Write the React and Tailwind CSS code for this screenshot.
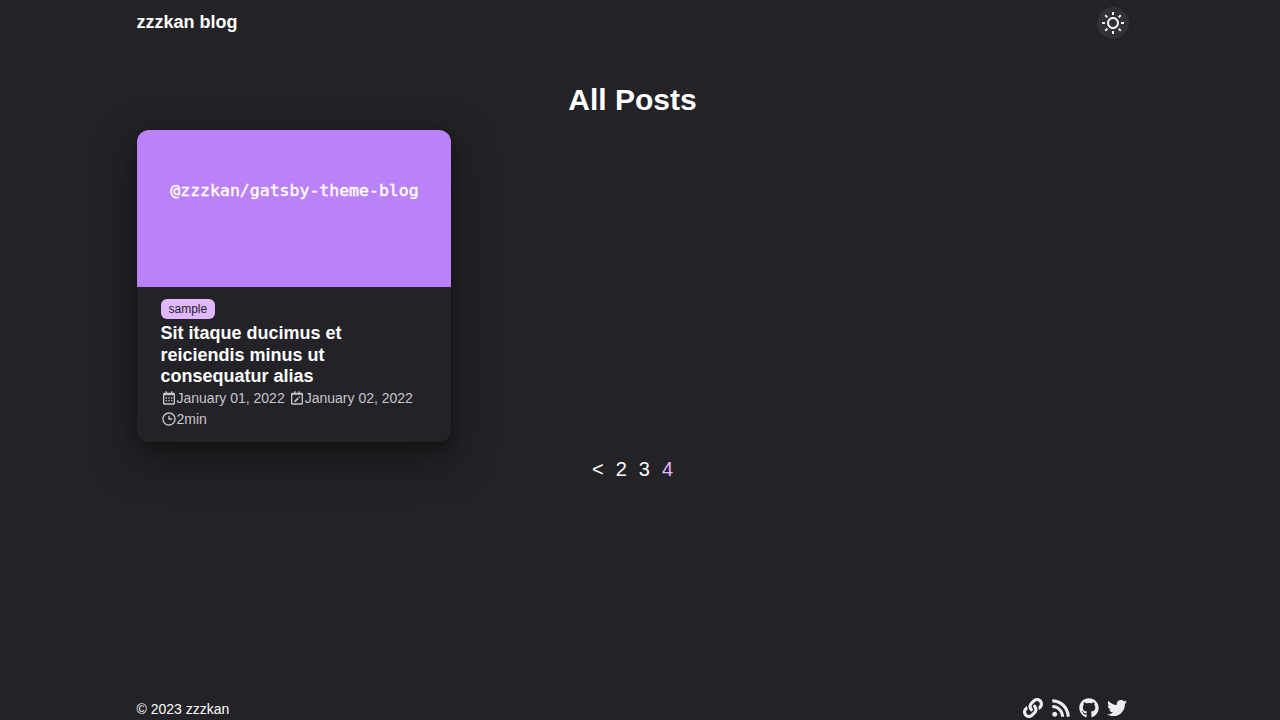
import { BiCalendar, BiCalendarEdit, BiTime } from "react-icons/bi";
import { RiSunLine } from "react-icons/ri";
import { FaLink, FaRss, FaGithub, FaTwitter } from "react-icons/fa";

function Header() {
  return (
    <header className="flex h-[46px] items-start justify-between">
      <a className="pt-2 text-lg leading-7 font-bold">zzzkan blog</a>
      <button aria-label="Toggle theme" className="mt-[7px] flex size-8 items-center justify-center rounded-full bg-[#323136] text-[#f1f0f2]">
        <RiSunLine size={24} />
      </button>
    </header>
  );
}

function PostCard() {
  return (
    <article className="h-[312px] w-[314px] overflow-hidden rounded-xl shadow-[0_5px_10px_rgba(12,12,10,0.3),0_15px_40px_rgba(12,12,10,0.6),0_0_0_1px_rgba(12,12,10,0.1)]">
      <div className="flex h-[157px] justify-center bg-[#bb81f9] pt-[50px] pl-0.5 font-['DejaVu_Sans_Mono',monospace] text-[16.5px] leading-[22px] text-white [-webkit-text-stroke:0.4px_white]">
        @zzzkan/gatsby-theme-blog
      </div>
      <div className="h-[155px] bg-[#232227] px-6 pt-3">
        <span className="flex h-5 w-fit items-center rounded-md bg-[#e0b8ff] px-2 text-xs text-[#232227]">sample</span>
        <h2 className="mt-1 text-lg leading-[21.6px] font-bold">Sit itaque ducimus et reiciendis minus ut consequatur alias</h2>
        <div className="flex flex-wrap gap-x-1 text-sm leading-[21px] text-[#c8c5cf]">
          <span className="flex items-center"><BiCalendar size={16} />January 01, 2022</span>
          <span className="flex items-center"><BiCalendarEdit size={16} />January 02, 2022</span>
          <span className="flex items-center"><BiTime size={16} />2min</span>
        </div>
      </div>
    </article>
  );
}

function Footer() {
  return (
    <footer className="mt-auto flex h-6 items-center justify-between">
      <span className="pt-0.5 text-sm">© 2023 zzzkan</span>
      <div className="flex gap-2 pr-0.5 text-[#eeedef]">
        <FaLink size={20} />
        <FaRss size={20} />
        <FaGithub size={20} />
        <FaTwitter size={20} />
      </div>
    </footer>
  );
}

export default function App() {
  return (
    <div className="h-screen overflow-hidden bg-[#232227] pr-[15px] font-['Liberation_Sans',sans-serif] text-white">
      <div className="mx-auto flex h-full w-[992px] flex-col">
        <Header />
        <main>
          <h1 className="pt-9 text-center text-3xl leading-9 font-bold">All Posts</h1>
          <div className="pt-3">
            <PostCard />
          </div>
          <nav className="flex justify-center gap-3 pt-3 text-xl leading-[30px]">
            <a>&lt;</a>
            <a>2</a>
            <a>3</a>
            <span className="text-[#e0b8ff]">4</span>
          </nav>
        </main>
        <Footer />
      </div>
    </div>
  );
}
